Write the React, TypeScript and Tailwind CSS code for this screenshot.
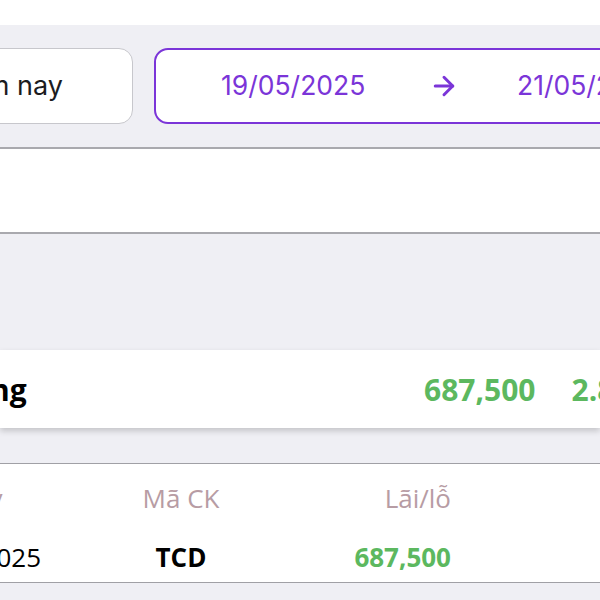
import { ArrowRight } from 'lucide-react';

const rows = [{ date: '19/05/2025', code: 'TCD', pnl: '687,500' }];

export default function App() {
  return (
    <div className="w-[600px] h-[600px] overflow-hidden bg-[#efeff4]">
      <div className="h-[25px] bg-white" />

      <div className="flex items-center gap-[21px] py-[23px] ml-[-80px] font-['Inter',sans-serif]">
        <div className="w-[213px] h-[76px] shrink-0 rounded-[14px] border-[1.5px] border-[#c7c7cc] bg-white flex items-center justify-end pr-[69px]">
          <span className="text-[27px] text-[#1c1c1e]">Hôm nay</span>
        </div>
        <div className="w-[520px] h-[76px] shrink-0 rounded-[14px] border-2 border-[#7b35d8] bg-white flex items-center text-[26.5px] text-[#7b35d8]">
          <span className="ml-[65px] w-[148px]">19/05/2025</span>
          <ArrowRight className="ml-[60px]" size={30} strokeWidth={2.4} />
          <span className="ml-[58px]">21/05/2025</span>
        </div>
      </div>

      <div className="h-[2px] bg-[#a9a9ae]" />
      <div className="h-[83px] bg-white" />
      <div className="h-[2px] bg-[#a9a9ae]" />

      <div className="h-[116px]" />

      <div className="h-[78px] bg-white shadow-[0_3px_6px_rgba(0,0,0,0.18)] flex items-center font-['Open_Sans',sans-serif] font-bold text-[30px]">
        <span className="w-[470px] ml-[-46px] shrink-0 text-black">Tổng</span>
        <span className="shrink-0 text-[#5cb85f]">687,500</span>
        <span className="ml-[36px] shrink-0 text-[#5cb85f]">2.86%</span>
      </div>

      <div className="h-[35px]" />
      <div className="h-px bg-[#a0a0a5]" />

      <div className="bg-white h-[118px] font-['Open_Sans',sans-serif] text-[26px]">
        <div className="flex items-center h-[68px] text-[#b79ca4]">
          <span className="w-[160px] ml-[-108px] shrink-0 text-center">Ngày</span>
          <span className="w-[150px] ml-[54px] shrink-0 text-center">Mã CK</span>
          <span className="w-[195px] shrink-0 text-right">Lãi/lỗ</span>
        </div>
        {rows.map((r) => (
          <div key={r.code} className="flex items-center h-[50px]">
            <span className="w-[160px] ml-[-108px] shrink-0 text-center text-black">{r.date}</span>
            <span className="w-[150px] ml-[54px] shrink-0 text-center font-bold text-black">{r.code}</span>
            <span className="w-[195px] shrink-0 text-right font-bold text-[#5cb85f]">{r.pnl}</span>
          </div>
        ))}
      </div>
      <div className="h-px bg-[#a0a0a5]" />
    </div>
  );
}
